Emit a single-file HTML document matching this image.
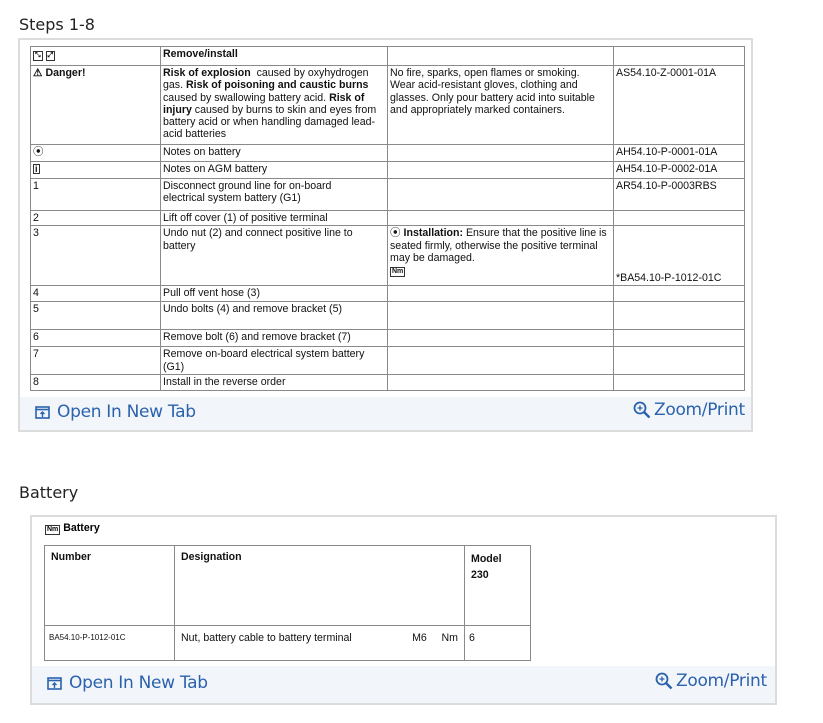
<!DOCTYPE html>
<html><head><meta charset="utf-8"><style>
*{margin:0;padding:0;box-sizing:border-box}
body{width:823px;height:723px;background:#fff;font-family:"Liberation Sans",Arial,sans-serif;position:relative;overflow:hidden}
.h{position:absolute;font-size:16px;color:#222;font-family:"DejaVu Sans","Liberation Sans",sans-serif}
.box{position:absolute;border:2px solid #dcdcdc;background:#fff}
.bar{position:absolute;background:#f2f5f9}
table{position:absolute;border-collapse:collapse;table-layout:fixed;font-size:10.6px;color:#111;line-height:12.3px}
td{border:1px solid #8a8a8a;vertical-align:top;padding:1px 2px;overflow:hidden}
b{font-weight:bold}
.ic{display:inline-block;border:1px solid #333;font-size:7px;line-height:8px;padding:0 1px;font-weight:bold}
.lk{position:absolute;display:flex;align-items:center;gap:7px;color:#2b62ae;font-size:17px;font-family:"DejaVu Sans","Liberation Sans",sans-serif;letter-spacing:-0.3px}
</style></head><body>
<div class="h" style="left:19px;top:15px">Steps 1-8</div>
<div class="box" style="left:18px;top:38px;width:735px;height:394px"></div>
<table style="left:30px;top:46px;width:714px">
<colgroup><col style="width:130px"><col style="width:227px"><col style="width:226px"><col style="width:131px"></colgroup>
<tr style="height:19px"><td><span class="ic">⤡</span> <span class="ic">⤢</span></td><td><b>Remove/install</b></td><td></td><td></td></tr>
<tr style="height:79px"><td><b>⚠ Danger!</b></td><td><b>Risk of explosion</b>&nbsp; caused by oxyhydrogen gas. <b>Risk of poisoning and caustic burns</b> caused by swallowing battery acid. <b>Risk of injury</b> caused by burns to skin and eyes from battery acid or when handling damaged lead-acid batteries</td><td style="padding-right:12px">No fire, sparks, open flames or smoking. Wear acid-resistant gloves, clothing and glasses. Only pour battery acid into suitable and appropriately marked containers.</td><td>AS54.10-Z-0001-01A</td></tr>
<tr style="height:17px"><td>⦿</td><td>Notes on battery</td><td></td><td>AH54.10-P-0001-01A</td></tr>
<tr style="height:17px"><td><span class="ic" style="font-size:9px">i</span></td><td>Notes on AGM battery</td><td></td><td>AH54.10-P-0002-01A</td></tr>
<tr style="height:32px"><td>1</td><td style="padding-right:20px">Disconnect ground line for on-board electrical system battery (G1)</td><td></td><td>AR54.10-P-0003RBS</td></tr>
<tr style="height:15px"><td>2</td><td>Lift off cover (1) of positive terminal</td><td></td><td></td></tr>
<tr style="height:60px"><td>3</td><td>Undo nut (2) and connect positive line to battery</td><td>⦿ <b>Installation:</b> Ensure that the positive line is seated firmly, otherwise the positive terminal may be damaged.<br><span class="ic">Nm</span></td><td style="vertical-align:bottom">*BA54.10-P-1012-01C</td></tr>
<tr style="height:16px"><td>4</td><td>Pull off vent hose (3)</td><td></td><td></td></tr>
<tr style="height:28px"><td>5</td><td>Undo bolts (4) and remove bracket (5)</td><td></td><td></td></tr>
<tr style="height:17px"><td>6</td><td>Remove bolt (6) and remove bracket (7)</td><td></td><td></td></tr>
<tr style="height:27px"><td>7</td><td>Remove on-board electrical system battery (G1)</td><td></td><td></td></tr>
<tr style="height:16px"><td>8</td><td>Install in the reverse order</td><td></td><td></td></tr>
</table>
<div class="bar" style="left:20px;top:397px;width:731px;height:33px"></div>
<div class="lk" style="left:35px;top:402px"><svg width="15" height="13" viewBox="0 0 15 13"><rect x="1" y="1" width="13" height="11" fill="none" stroke="#2b62ae" stroke-width="1.6"/><line x1="1" y1="3.5" x2="14" y2="3.5" stroke="#2b62ae" stroke-width="1.6"/><path d="M7.5 11V6M5.5 8L7.5 6L9.5 8" fill="none" stroke="#2b62ae" stroke-width="1.4"/></svg>Open In New Tab</div>
<div class="lk" style="left:633px;top:400px"><svg width="18" height="18" viewBox="0 0 18 18"><circle cx="7" cy="7" r="5.5" fill="none" stroke="#2b62ae" stroke-width="1.8"/><path d="M11 11L16.5 16.5" stroke="#2b62ae" stroke-width="2.4"/><path d="M7 4.5V9.5M4.5 7H9.5" stroke="#2b62ae" stroke-width="1.3"/></svg><span style="margin-left:-4px">Zoom/Print</span></div>

<div class="h" style="left:19px;top:483px">Battery</div>
<div class="box" style="left:30px;top:515px;width:747px;height:190px"></div>
<div style="position:absolute;left:45px;top:522px;font-size:10.6px;font-weight:bold"><span class="ic">Nm</span> Battery</div>
<table style="left:44px;top:545px;width:486px">
<colgroup><col style="width:130px"><col style="width:290px"><col style="width:66px"></colgroup>
<tr style="height:80px"><td style="padding:5px 6px"><b>Number</b></td><td style="padding:5px 6px"><b>Designation</b></td><td style="padding:5px 6px;line-height:16px"><b>Model<br>230</b></td></tr>
<tr style="height:35px"><td style="padding:6px 4px;font-size:8px">BA54.10-P-1012-01C</td><td style="padding:6px 6px">Nut, battery cable to battery terminal<span style="float:right">M6&nbsp;&nbsp;&nbsp;&nbsp;&nbsp;Nm</span></td><td style="padding:6px 4px">6</td></tr>
</table>
<div class="bar" style="left:32px;top:666px;width:743px;height:37px"></div>
<div class="lk" style="left:47px;top:673px"><svg width="15" height="13" viewBox="0 0 15 13"><rect x="1" y="1" width="13" height="11" fill="none" stroke="#2b62ae" stroke-width="1.6"/><line x1="1" y1="3.5" x2="14" y2="3.5" stroke="#2b62ae" stroke-width="1.6"/><path d="M7.5 11V6M5.5 8L7.5 6L9.5 8" fill="none" stroke="#2b62ae" stroke-width="1.4"/></svg>Open In New Tab</div>
<div class="lk" style="left:655px;top:671px"><svg width="18" height="18" viewBox="0 0 18 18"><circle cx="7" cy="7" r="5.5" fill="none" stroke="#2b62ae" stroke-width="1.8"/><path d="M11 11L16.5 16.5" stroke="#2b62ae" stroke-width="2.4"/><path d="M7 4.5V9.5M4.5 7H9.5" stroke="#2b62ae" stroke-width="1.3"/></svg><span style="margin-left:-4px">Zoom/Print</span></div>
</body></html>
